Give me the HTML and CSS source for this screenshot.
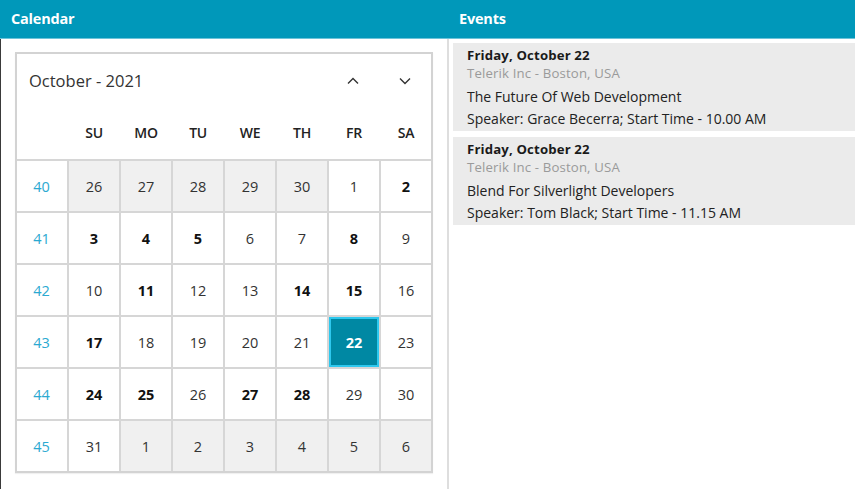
FILE: index.html
```html
<!DOCTYPE html>
<html>
<head>
<meta charset="utf-8">
<link rel="stylesheet" href="styles.css">
</head>
<body>
<div class="app">
  <div class="topbar">
    <div class="topbar-cal">Calendar</div>
    <div class="topbar-ev">Events</div>
  </div>
  <div class="main">
    <div class="cal-pane">
      <div class="calendar">
        <div class="cal-head">
          <div class="cal-title">October - 2021</div>
          <div class="cal-nav">
            <svg class="chev" width="14" height="14" viewBox="0 0 14 14"><path d="M2 9.5 L7 4.5 L12 9.5" fill="none" stroke="#333" stroke-width="1.4"/></svg>
            <svg class="chev" width="14" height="14" viewBox="0 0 14 14"><path d="M2 4.5 L7 9.5 L12 4.5" fill="none" stroke="#333" stroke-width="1.4"/></svg>
          </div>
        </div>
        <div class="dow">
          <div></div><div>SU</div><div>MO</div><div>TU</div><div>WE</div><div>TH</div><div>FR</div><div>SA</div>
        </div>
        <div class="grid">
          <div class="wk">40</div><div class="d other">26</div><div class="d other">27</div><div class="d other">28</div><div class="d other">29</div><div class="d other">30</div><div class="d">1</div><div class="d b">2</div>
          <div class="wk">41</div><div class="d b">3</div><div class="d b">4</div><div class="d b">5</div><div class="d">6</div><div class="d">7</div><div class="d b">8</div><div class="d">9</div>
          <div class="wk">42</div><div class="d">10</div><div class="d b">11</div><div class="d">12</div><div class="d">13</div><div class="d b">14</div><div class="d b">15</div><div class="d">16</div>
          <div class="wk">43</div><div class="d b">17</div><div class="d">18</div><div class="d">19</div><div class="d">20</div><div class="d">21</div><div class="d b sel">22</div><div class="d">23</div>
          <div class="wk">44</div><div class="d b">24</div><div class="d b">25</div><div class="d">26</div><div class="d b">27</div><div class="d b">28</div><div class="d">29</div><div class="d">30</div>
          <div class="wk">45</div><div class="d">31</div><div class="d other">1</div><div class="d other">2</div><div class="d other">3</div><div class="d other">4</div><div class="d other">5</div><div class="d other">6</div>
        </div>
      </div>
    </div>
    <div class="ev-pane">
      <div class="event">
        <div class="ev-date">Friday, October 22</div>
        <div class="ev-loc">Telerik Inc - Boston, USA</div>
        <div class="ev-title">The Future Of Web Development</div>
        <div class="ev-speaker">Speaker: Grace Becerra; Start Time - 10.00 AM</div>
      </div>
      <div class="event">
        <div class="ev-date">Friday, October 22</div>
        <div class="ev-loc">Telerik Inc - Boston, USA</div>
        <div class="ev-title">Blend For Silverlight Developers</div>
        <div class="ev-speaker">Speaker: Tom Black; Start Time - 11.15 AM</div>
      </div>
    </div>
  </div>
</div>
</body>
</html>
```

FILE: styles.css
```css
html, body {
  margin: 0;
  padding: 0;
  background: #ffffff;
}
body {
  font-family: "Open Sans", "Noto Sans", "Liberation Sans", sans-serif;
  color: #222;
  width: 855px;
  height: 489px;
  overflow: hidden;
}
.app {
  display: flex;
  flex-direction: column;
  height: 489px;
}
.topbar {
  height: 38px;
  background: #0098ba;
  border-bottom: 1px solid #6cc3d9;
  display: flex;
  color: #ffffff;
  font-weight: 700;
  font-size: 14.5px;
}
.topbar-cal {
  width: 448px;
  padding-left: 11px;
  box-sizing: border-box;
  line-height: 37px;
  letter-spacing: -0.2px;
}
.topbar-ev {
  padding-left: 11px;
  line-height: 37px;
  letter-spacing: -0.2px;
}
.main {
  flex: 1;
  display: flex;
  border-left: 1px solid #3a3a3a;
}
.cal-pane {
  width: 448px;
  border-right: 2px solid #dedede;
  padding: 13px 0 0 14px;
  box-sizing: border-box;
}
.calendar {
  width: 418px;
  border: 2px solid #d3d3d3;
  box-sizing: border-box;
  box-shadow: 0 1px 1px rgba(0,0,0,0.06);
}
.cal-head {
  height: 53px;
  display: flex;
  align-items: center;
  justify-content: space-between;
  padding: 0 0 0 12px;
}
.cal-title {
  font-size: 16.5px;
  color: #333;
  padding-bottom: 1px;
}
.cal-nav {
  display: flex;
  gap: 38px;
  padding-right: 19px;
}
.chev {
  display: block;
}
.dow {
  height: 52px;
  display: grid;
  grid-template-columns: repeat(8, 50px);
  column-gap: 2px;
  align-items: center;
  font-size: 14px;
  font-weight: 600;
  color: #222;
  letter-spacing: -0.3px;
  text-align: center;
}
.dow div {
  padding-bottom: 2px;
}
.grid {
  display: grid;
  grid-template-columns: repeat(8, 50px);
  grid-auto-rows: 50px;
  gap: 2px;
  border-top: 2px solid #d6d6d6;
  background: #d6d6d6;
}
.wk, .d {
  display: flex;
  align-items: center;
  justify-content: center;
  font-size: 14.5px;
  background: #ffffff;
}
.wk {
  color: #2ba9d1;
  padding-right: 1px;
}
.d {
  color: #333;
}
.d.other {
  background: #f0f0f0;
}
.d.b {
  font-weight: 700;
  color: #111;
}
.d.sel {
  background: #0088a3;
  color: #ffffff;
  box-shadow: inset 0 0 0 2px #2ec8ee;
}
.ev-pane {
  flex: 1;
  padding: 4px 0 0 4px;
  display: flex;
  flex-direction: column;
  gap: 6px;
}
.event {
  background: #ebebeb;
  padding: 3px 0 1px 14px;
  font-size: 14px;
}
.ev-date {
  font-weight: 700;
  color: #1a1a1a;
  font-size: 13.2px;
  letter-spacing: 0.15px;
  line-height: 18px;
}
.ev-loc {
  color: #9a9a9a;
  font-size: 13.2px;
  letter-spacing: 0.15px;
  line-height: 18px;
}
.ev-title {
  color: #222;
  line-height: 22px;
  margin-top: 4px;
}
.ev-speaker {
  color: #222;
  line-height: 22px;
}
```
